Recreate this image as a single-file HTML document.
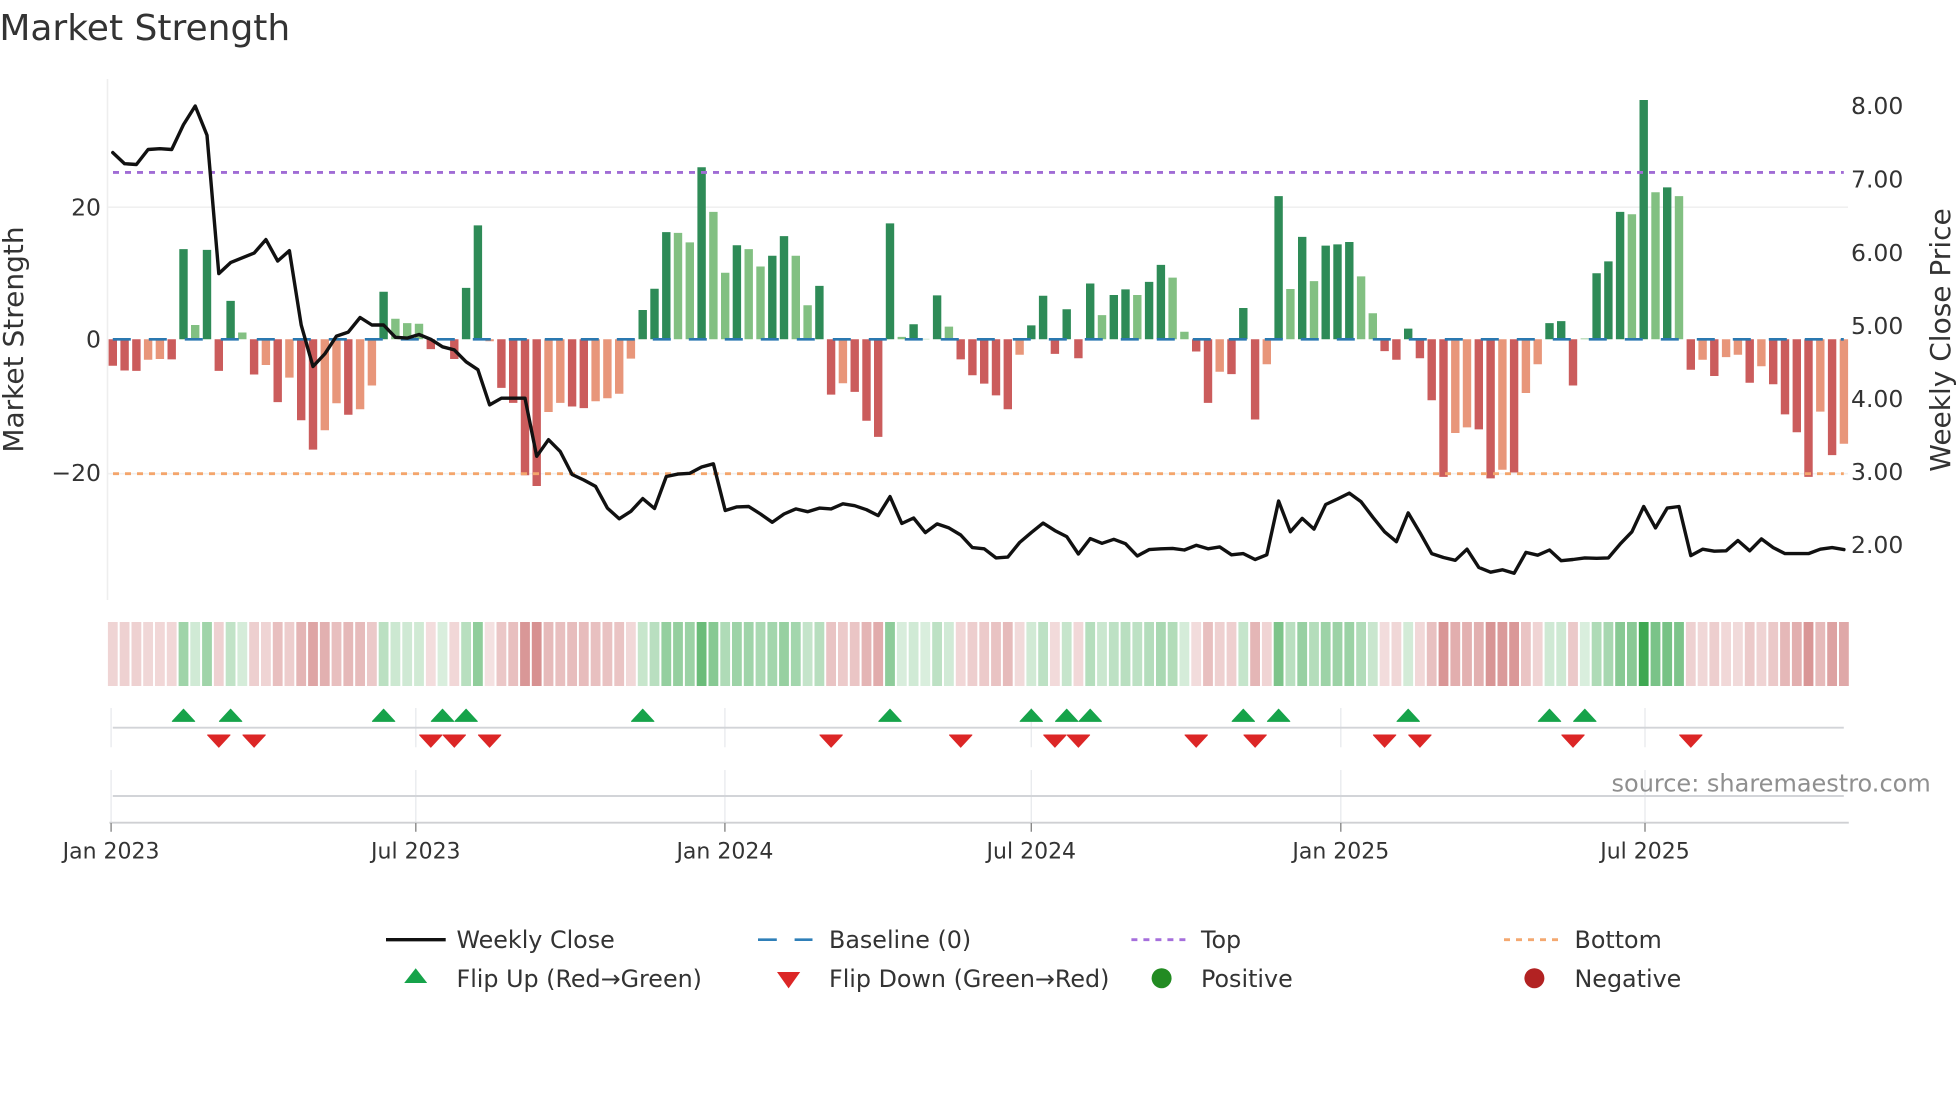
<!DOCTYPE html>
<html><head><meta charset="utf-8"><title>Market Strength</title>
<style>
html,body{margin:0;padding:0;background:#fff;width:1960px;height:1102px;overflow:hidden}
svg{display:block}
text{font-family:"DejaVu Sans","Liberation Sans",sans-serif;fill:#333}
</style></head><body>
<svg id="c" xmlns="http://www.w3.org/2000/svg" width="1960" height="1102" viewBox="0 0 1960 1102">
<rect width="1960" height="1102" fill="#fff"/>
<g id="under" fill="none">
<path d="M107.5 79V600" stroke="#eeeeee" stroke-width="1.6"/>
<path d="M108 207.2H1848" stroke="#f0f0f0" stroke-width="1.6"/>
<path d="M108 473.7H1848" stroke="#f0f0f0" stroke-width="1.6"/>
</g>
<g id="bars"></g>
<g fill="none">
<path d="M113 172.4H1843.8" stroke="#a06cd5" stroke-width="2.9" stroke-dasharray="6 6"/>
<path d="M113 473.7H1843.8" stroke="#f4a56c" stroke-width="2.9" stroke-dasharray="6 6"/>
<path d="M112.8 339.3H1843.8" stroke="#2a78b0" stroke-width="2.7" stroke-dasharray="18 18"/>
</g>
<path id="line" fill="none" stroke="#111" stroke-width="3.4" stroke-linejoin="round" stroke-linecap="round" d=""/>
<g id="heat"></g>
<g fill="none" stroke="#e9ebee" stroke-width="1.4">
<path d="M111.1 708V747.3M111.1 770V822M415.8 708V747.3M415.8 770V822M724.9 708V747.3M724.9 770V822M1031.3 708V747.3M1031.3 770V822M1340.8 708V747.3M1340.8 770V822M1645 708V747.3M1645 770V822"/>
</g>
<g fill="none" stroke="#d2d4d8" stroke-width="1.9">
<path d="M112.8 727.7H1843.8"/>
<path d="M112.8 796H1843.8"/>
<path d="M109.4 822.7H1848.8" stroke="#cfd0d3"/>
</g>
<path d="M111.1 823V831.7M415.8 823V831.7M724.9 823V831.7M1031.3 823V831.7M1340.8 823V831.7M1645 823V831.7" stroke="#888" stroke-width="1.4" fill="none"/>
<path id="ups" fill="#16a34a" stroke="#16a34a" stroke-width="1" stroke-linejoin="round" d=""/>
<path id="downs" fill="#dc2626" stroke="#dc2626" stroke-width="1" stroke-linejoin="round" d=""/>

<text x="-0.7" y="40" font-size="36">Market Strength</text>
<text transform="translate(23 339.5) rotate(-90)" text-anchor="middle" font-size="28">Market Strength</text>
<text transform="translate(1950 340) rotate(-90)" text-anchor="middle" font-size="28">Weekly Close Price</text>

<g font-size="23.5">
<text x="101" y="215.6" text-anchor="end">20</text>
<text x="101" y="347.6" text-anchor="end">0</text>
<text x="101" y="481" text-anchor="end">−20</text>
<text x="1851" y="114.2">8.00</text>
<text x="1851" y="187.3">7.00</text>
<text x="1851" y="260.9">6.00</text>
<text x="1851" y="334">5.00</text>
<text x="1851" y="407.2">4.00</text>
<text x="1851" y="479.9">3.00</text>
<text x="1851" y="553.1">2.00</text>
</g>
<g font-size="22" text-anchor="middle">
<text x="111.1" y="858.7">Jan 2023</text>
<text x="415.8" y="858.7">Jul 2023</text>
<text x="724.9" y="858.7">Jan 2024</text>
<text x="1031.3" y="858.7">Jul 2024</text>
<text x="1340.8" y="858.7">Jan 2025</text>
<text x="1645" y="858.7">Jul 2025</text>
</g>
<text x="1611.5" y="791.7" font-size="24" style="fill:#8f8f8f">source: sharemaestro.com</text>

<path d="M386 939.7H445.7" stroke="#111" stroke-width="3.4" fill="none"/>
<path d="M758 939.7H776.8M794.6 939.7H812.5" stroke="#2f7fb8" stroke-width="2.6" fill="none"/>
<path d="M1131.4 939.7H1186" stroke="#a56fdc" stroke-width="2.8" stroke-dasharray="6 6" fill="none"/>
<path d="M1504 939.7H1558.5" stroke="#f4a870" stroke-width="2.8" stroke-dasharray="6 6" fill="none"/>
<path d="M404.2 983L415.7 968.2L427.2 983Z" fill="#16a34a"/>
<path d="M777 972L788.6 988.4L800.2 972Z" fill="#dc2626"/>
<circle cx="1161.6" cy="978.2" r="10" fill="#228b22"/>
<circle cx="1534.4" cy="978.2" r="10" fill="#b22222"/>
<g font-size="23.8">
<text x="456.5" y="948">Weekly Close</text>
<text x="829" y="948">Baseline (0)</text>
<text x="1201" y="948">Top</text>
<text x="1574.5" y="948">Bottom</text>
<text x="456.5" y="987">Flip Up (Red→Green)</text>
<text x="829" y="987">Flip Down (Green→Red)</text>
<text x="1201" y="987">Positive</text>
<text x="1574.5" y="987">Negative</text>
</g>
</svg>
<script>
(function(){
var B=[925,937,938,910,908,909,630,822,632,938,761,841,947,923,1017,955,1063,1137,1088,1020,1049,1035,975,738,806,817,819,883,857,908,728,570,863,981,1019,1202,1229,1042,1019,1028,1032,1015,1007,996,907,784,730,587,589,613,423,536,690,620,630,674,647,597,647,772,723,998,969,991,1064,1105,565,852,820,857,747,826,909,949,970,1000,1035,897,823,748,895,782,906,717,797,746,732,746,713,670,702,839,889,1019,940,946,779,1061,921,496,731,599,711,621,618,612,699,792,888,910,831,906,1012,1206,1095,1081,1086,1210,1188,1195,994,921,817,812,975,856,691,661,536,542,253,486,474,496,935,910,951,903,897,968,926,972,1048,1093,1206,1041,1151,1122];
var T="DDDLLDDLDDDLDLDLDDLLDLLDLLLDLDDDLDDDDLLDDLLLLDDDLLDLLDLLDDLLDDLDDDDLDLDLDDDDDLDDDDDDLDDLDDLLDDLDDDLDLDLDDDLLDDDDDDLLDDLDLLDDDLDDDLDLDLDLDLLDLDDDDLDL";
var L=[386,414,416,378,376,378,315,268,342,692,664,652,640,606,660,634,822,927,895,850,840,803,822,822,853,855,846,858,877,885,915,935,1024,1007,1007,1007,1154,1112,1142,1200,1214,1230,1285,1312,1293,1261,1286,1205,1199,1197,1181,1173,1291,1282,1281,1300,1321,1300,1287,1294,1285,1287,1274,1279,1289,1304,1256,1324,1310,1347,1325,1335,1353,1385,1388,1411,1409,1372,1347,1323,1342,1357,1401,1362,1374,1364,1375,1406,1390,1388,1387,1391,1379,1388,1383,1403,1400,1415,1403,1267,1345,1311,1338,1276,1262,1247,1269,1308,1345,1370,1297,1347,1400,1410,1417,1389,1435,1447,1441,1450,1397,1404,1391,1418,1415,1411,1412,1411,1376,1345,1281,1335,1285,1281,1405,1389,1394,1393,1367,1393,1363,1385,1400,1400,1400,1389,1385,1390];
var X0=112.8,S=11.776,Y=2.529,Z=339.3,NS="http://www.w3.org/2000/svg",i;
var P={gd:"",gl:"",rd:"",rl:""};
function x(i){return X0+S*i}
var heat=document.getElementById("heat");
for(i=0;i<B.length;i++){
  var y=B[i]/Y,up=y<Z,k=(up?"g":"r")+(T.charAt(i)=="L"?"l":"d"),cx=x(i);
  P[k]+="M"+(cx-4.2).toFixed(1)+" "+Z+"V"+y.toFixed(1)+"h8.4V"+Z+"Z";
  var v=Math.abs(Z-y)/6.6,a=Math.min(1,.18+.74*v/36+(up?0:-.02)),c=up?[47,161,68]:[190,76,76];
  var r=document.createElementNS(NS,"rect");
  r.setAttribute("x",(cx-4.9).toFixed(1));r.setAttribute("y","622");r.setAttribute("width","9.8");r.setAttribute("height","64");
  r.setAttribute("fill","rgb("+c.map(function(q){return Math.round(255-(255-q)*a)}).join(",")+")");
  heat.appendChild(r);
}
var C={gd:"#2e8b57",gl:"#82c082",rd:"#cb5c5c",rl:"#e8967a"},g=document.getElementById("bars");
for(var k2 in P){var p=document.createElementNS(NS,"path");p.setAttribute("d",P[k2]);p.setAttribute("fill",C[k2]);g.appendChild(p)}
var d="";for(i=0;i<L.length;i++){d+=(i?"L":"M")+x(i).toFixed(1)+" "+(L[i]/Y).toFixed(1)}
document.getElementById("line").setAttribute("d",d);
var U=[6,10,23,28,30,45,66,78,81,83,96,99,110,122,125],D=[9,12,27,29,32,61,72,80,82,92,97,108,111,124,134],u="",w="";
U.forEach(function(n){var c=x(n);u+="M"+(c-11.2).toFixed(1)+" 721.4L"+c.toFixed(1)+" 709.2L"+(c+11.2).toFixed(1)+" 721.4Z"});
D.forEach(function(n){var c=x(n);w+="M"+(c-11.2).toFixed(1)+" 735L"+c.toFixed(1)+" 747.2L"+(c+11.2).toFixed(1)+" 735Z"});
document.getElementById("ups").setAttribute("d",u);
document.getElementById("downs").setAttribute("d",w);
})();
</script>
</body></html>
